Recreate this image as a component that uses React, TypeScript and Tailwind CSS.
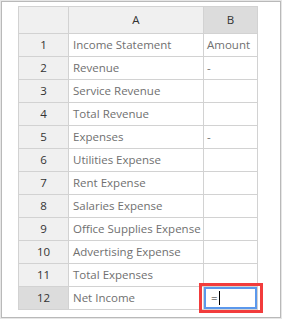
const rows = [
  { n: 1, a: "Income Statement", b: "Amount" },
  { n: 2, a: "Revenue", b: "-" },
  { n: 3, a: "Service Revenue", b: "" },
  { n: 4, a: "Total Revenue", b: "" },
  { n: 5, a: "Expenses", b: "-" },
  { n: 6, a: "Utilities Expense", b: "" },
  { n: 7, a: "Rent Expense", b: "" },
  { n: 8, a: "Salaries Expense", b: "" },
  { n: 9, a: "Office Supplies Expense", b: "" },
  { n: 10, a: "Advertising Expense", b: "" },
  { n: 11, a: "Total Expenses", b: "" },
];

export default function App() {
  return (
    <div className="w-[282px] h-[319px] bg-[#e6e6e6] p-[1px] font-['Open_Sans',sans-serif]">
      <div className="w-full h-full bg-white border border-[#b9b9b9] pl-[16px] pt-[4px]">
        <table className="border-collapse text-[11.5px] leading-none">
          <thead>
            <tr className="h-[27px]">
              <th className="w-[50px] bg-[#f0f0f0] border border-[#d2d2d2]"></th>
              <th className="w-[135px] bg-[#f0f0f0] border border-[#d2d2d2] font-normal text-[#333]">A</th>
              <th className="w-[54px] bg-[#dcdcdc] border border-[#d2d2d2] font-normal text-[#333]">B</th>
            </tr>
          </thead>
          <tbody>
            {rows.map((r) => (
              <tr key={r.n} className="h-[23px]">
                <td className="bg-[#f0f0f0] border border-[#d2d2d2] text-center text-[#333]">{r.n}</td>
                <td className="border border-[#d2d2d2] pl-[4px] text-[#707070] whitespace-nowrap">{r.a}</td>
                <td className="border border-[#d2d2d2] pl-[3px] text-[#707070]">{r.b}</td>
              </tr>
            ))}
            <tr className="h-[23px]">
              <td className="bg-[#dcdcdc] border border-[#d2d2d2] text-center text-[#333]">12</td>
              <td className="border border-[#d2d2d2] pl-[4px] text-[#707070]">Net Income</td>
              <td className="relative border border-[#d2d2d2] p-0">
                <div className="h-[22px] border-2 border-[#5b98ec] flex items-center pl-[5px] text-[#222]">
                  =<span className="inline-block w-[1px] h-[14px] bg-black ml-[1px]"></span>
                </div>
                <div className="absolute left-[-5px] right-[-6px] top-[-4px] bottom-[-4px] border-[3px] border-[#f23c3c]"></div>
              </td>
            </tr>
          </tbody>
        </table>
      </div>
    </div>
  );
}
